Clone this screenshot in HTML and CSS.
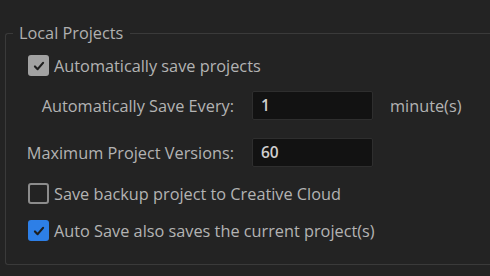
FILE: index.html
```html
<!DOCTYPE html>
<html>
<head>
  <title>Auto Save</title>
  <link rel="stylesheet" href="styles.css">
</head>
<body>
  <!-- Local projects group -->
  <fieldset class="group">
    <legend>Local Projects</legend>

    <label class="check-row">
      <span class="box gray"><svg viewBox="0 0 20 20"><path d="M5.5 10.5l3 3 6-7"/></svg></span>
      Automatically save projects
    </label>

    <div class="field-row indent">
      <span class="field-label">Automatically Save Every:</span>
      <span class="field-input">1</span>
      <span class="unit">minute(s)</span>
    </div>

    <div class="field-row second">
      <span class="field-label">Maximum Project Versions:</span>
      <span class="field-input">60</span>
    </div>

    <label class="check-row gap">
      <span class="box empty"></span>
      Save backup project to Creative Cloud
    </label>

    <label class="check-row gap">
      <span class="box blue"><svg viewBox="0 0 20 20"><path d="M5.5 10.5l3 3 6-7"/></svg></span>
      Auto Save also saves the current project(s)
    </label>
  </fieldset>
</body>
</html>
```

FILE: styles.css
```css
/* Base */
body, html {
  margin: 0;
  padding: 0;
  height: 100%;
  background: #232323;
  font-family: 'Open Sans', 'Noto Sans', sans-serif;
  color: #b3b3b3;
  overflow: hidden;
}

/* Group box */
.group {
  margin: 23px 0 0 5px;
  padding: 12px 0 23px 0;
  border: 1px solid #3a3a3a;
  border-right: none;
  border-radius: 3px 0 0 3px;
  display: flex;
  flex-direction: column;
}

.group legend {
  margin-left: 7px;
  padding: 0 7px 0 6px;
  font-size: 16.3px;
  line-height: 20px;
  color: #b0b0b0;
}

/* Checkbox rows */
.check-row {
  display: flex;
  align-items: center;
  height: 21px;
  padding-left: 22px;
  font-size: 16.3px;
  gap: 5px;
}

.check-row.gap {
  margin-top: 16px;
}

.box {
  width: 21px;
  height: 21px;
  box-sizing: border-box;
  border-radius: 3px;
  display: flex;
  align-items: center;
  justify-content: center;
  flex: none;
}

.box svg {
  width: 18px;
  height: 18px;
  fill: none;
  stroke: #1e1e1e;
  stroke-width: 2.4;
  stroke-linecap: round;
  stroke-linejoin: round;
}

.box.gray {
  background: #a2a2a2;
}

.box.blue {
  background: #2d7fe7;
}

.box.empty {
  border: 2px solid #8c8c8c;
}

/* Label + input rows */
.field-row {
  display: flex;
  align-items: center;
  height: 29px;
  font-size: 16.3px;
}

.field-row.indent {
  margin-top: 15px;
}

.field-row.second {
  margin-top: 18px;
}

.field-label {
  width: 228px;
  text-align: right;
  margin-right: 18px;
}

.field-input {
  width: 121px;
  height: 29px;
  box-sizing: border-box;
  background: #121212;
  border: 1px solid #2e2e2e;
  border-radius: 2px;
  padding-left: 8px;
  line-height: 27px;
  color: #cfcfcf;
  font-weight: 600;
  font-size: 15.5px;
}

.unit {
  margin-left: 17px;
}
```
